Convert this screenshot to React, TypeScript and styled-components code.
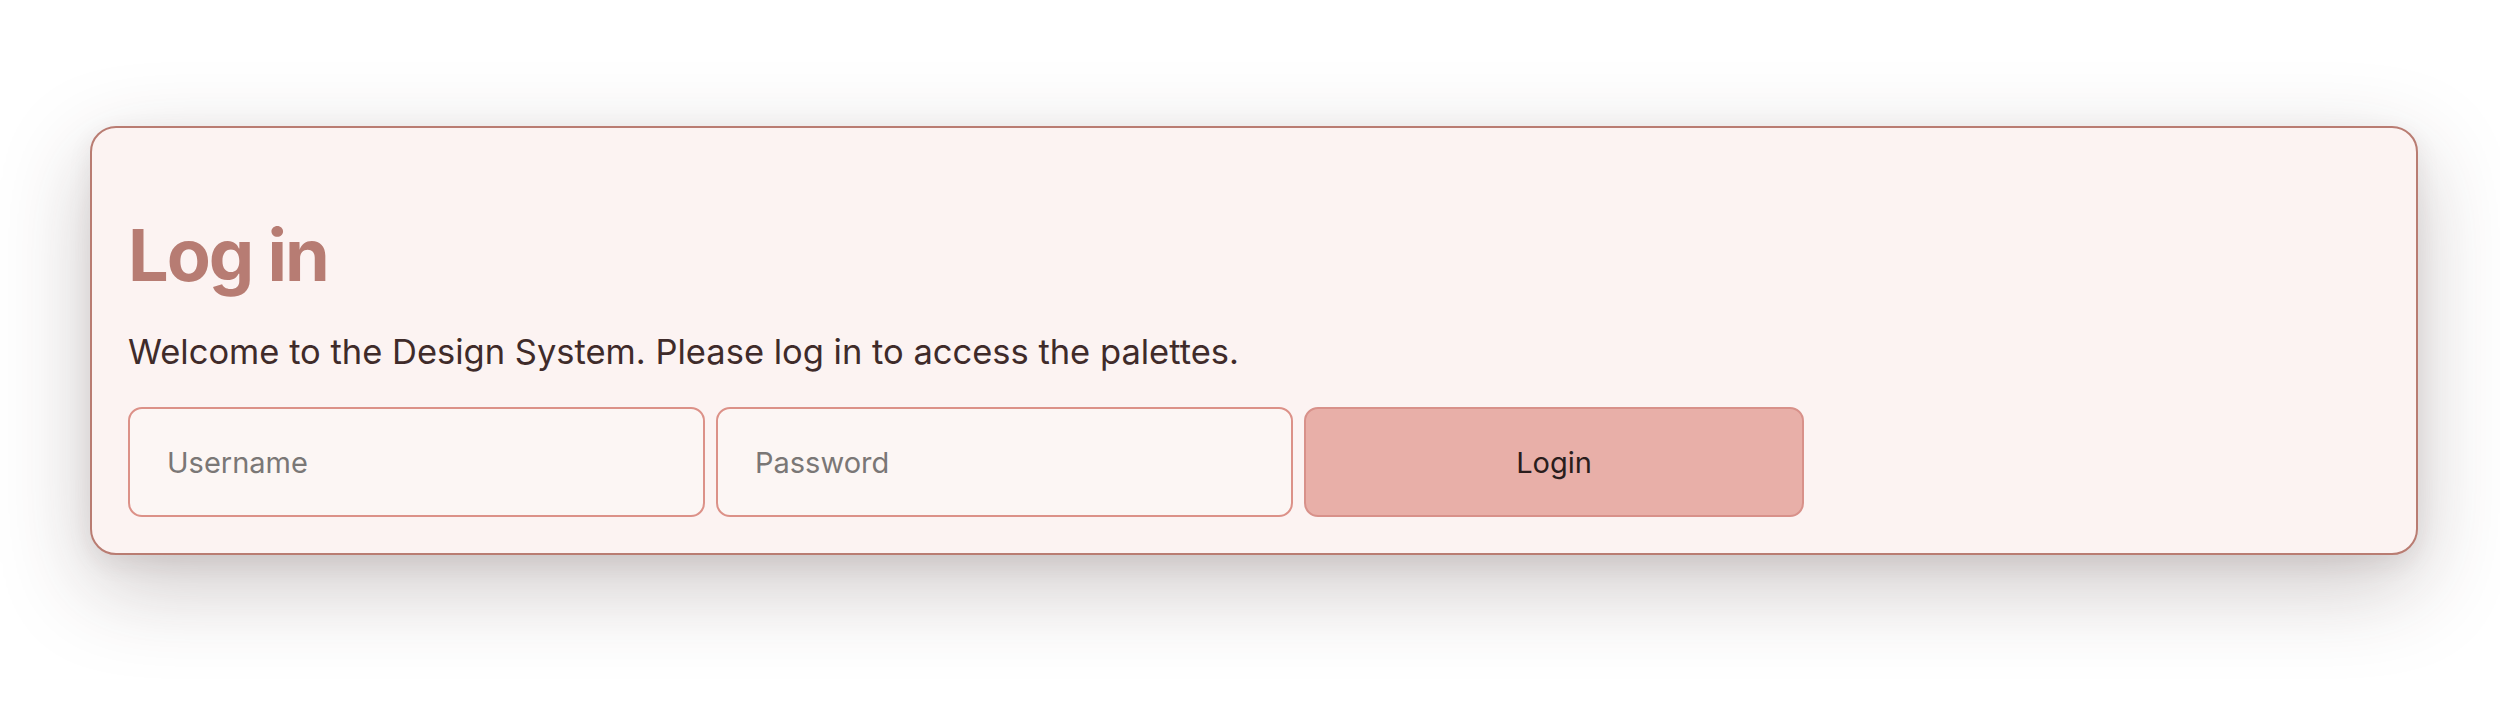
import React from "react";
import styled, { createGlobalStyle } from "styled-components";

const GlobalStyle = createGlobalStyle`
  html, body {
    margin: 0;
    padding: 0;
    background: #ffffff;
  }
  body {
    font-family: Inter, "Noto Sans", "Liberation Sans", sans-serif;
  }
  * { box-sizing: border-box; }
`;

const Page = styled.div`
  width: 2500px;
  height: 715px;
  padding: 126px 82px 0 90px;
`;

const Card = styled.section`
  width: 2328px;
  background: #fcf3f2;
  border: 2px solid #b97c72;
  border-radius: 26px;
  padding: 84px 36px 36px 36px;
  box-shadow: 0 30px 90px rgba(60, 40, 40, 0.26), 0 8px 24px rgba(60, 40, 40, 0.08);
  display: flex;
  flex-direction: column;
`;

const Title = styled.h1`
  margin: 0;
  font-size: 72px;
  line-height: 86px;
  font-weight: 700;
  color: #b77c73;
  letter-spacing: -2px;
`;

const Subtitle = styled.p`
  margin: 32px 0 0 0;
  font-size: 34.5px;
  line-height: 44px;
  color: #3f2b2a;
`;

const Form = styled.form`
  margin-top: 33px;
  display: flex;
  gap: 11px;
`;

const Field = styled.input`
  width: 577px;
  height: 110px;
  padding: 0 37px;
  border: 2px solid #dc9188;
  border-radius: 14px;
  background: #fcf6f4;
  font-family: inherit;
  font-size: 29px;
  color: #3f2b2a;
  outline: none;
  &::placeholder {
    color: #7a7776;
  }
`;

const Button = styled.button`
  width: 500px;
  height: 110px;
  border: 2px solid #d8918a;
  border-radius: 14px;
  background: #e8afa8;
  font-family: inherit;
  font-size: 29px;
  color: #2a1d1c;
  cursor: pointer;
`;

export default function App() {
  return (
    <>
      <GlobalStyle />
      <Page>
        <Card>
          <Title>Log in</Title>
          <Subtitle>Welcome to the Design System. Please log in to access the palettes.</Subtitle>
          <Form onSubmit={(e) => e.preventDefault()}>
            <Field type="text" placeholder="Username" />
            <Field type="password" placeholder="Password" />
            <Button type="submit">Login</Button>
          </Form>
        </Card>
      </Page>
    </>
  );
}
